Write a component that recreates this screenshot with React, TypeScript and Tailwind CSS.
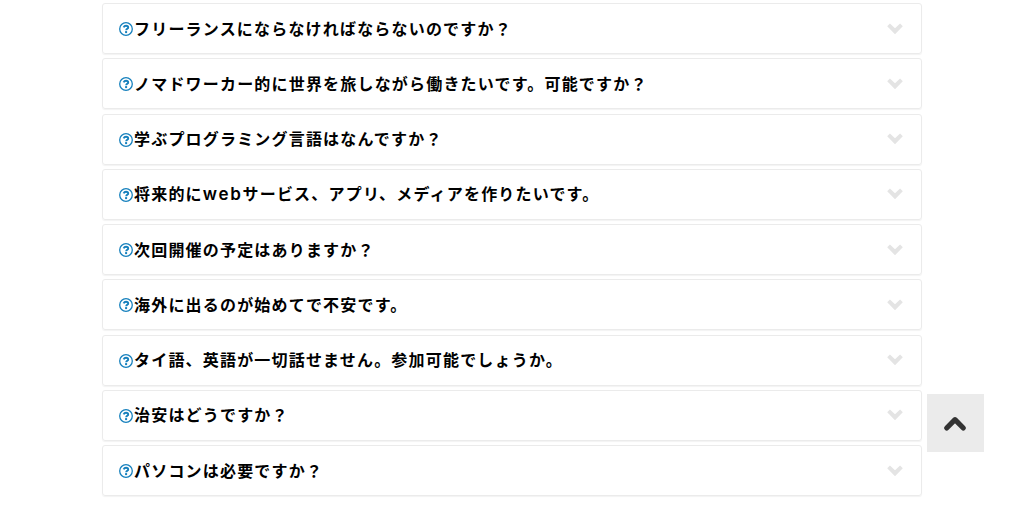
const questions = [
  "フリーランスにならなければならないのですか？",
  "ノマドワーカー的に世界を旅しながら働きたいです。可能ですか？",
  "学ぶプログラミング言語はなんですか？",
  "将来的にwebサービス、アプリ、メディアを作りたいです。",
  "次回開催の予定はありますか？",
  "海外に出るのが始めてで不安です。",
  "タイ語、英語が一切話せません。参加可能でしょうか。",
  "治安はどうですか？",
  "パソコンは必要ですか？",
];

function QuestionIcon() {
  return (
    <svg viewBox="0 0 14 14" className="mt-px size-3.5 shrink-0 text-[#1680bd]" fill="none" stroke="currentColor">
      <circle cx="7" cy="7" r="6.3" strokeWidth="1.3" />
      <path d="M4.6 5.3C5.1 4.2 5.9 3.7 7 3.7c1.2 0 2.2.7 2.2 1.7 0 1.4-2 1.4-2 2.9" strokeWidth="1.9" />
      <path d="M7.1 9.1v2" strokeWidth="2" />
    </svg>
  );
}

function Question({ text }: { text: string }) {
  return (
    <span className="ml-px flex-1 whitespace-nowrap pt-[0.25px] text-[16px] font-bold leading-6 tracking-[1.19px] text-black">
      {text.split(/(web)/).map((part, i) =>
        part === "web" ? <span key={i} className="text-[17px] font-semibold tracking-[1.7px]">{part}</span> : part
      )}
    </span>
  );
}

export default function App() {
  return (
    <main className="relative h-[524px] overflow-hidden bg-white pt-[3px] pl-[102px] font-['Inter','Noto_Sans_CJK_JP',sans-serif]">
      <div className="flex w-[820px] flex-col gap-[4.25px]">
        {questions.map((q) => (
          <button key={q} className="flex h-[51px] items-center rounded-[3px] border border-[#ebebeb] pr-[18px] pl-4 text-left shadow-[0_1px_1px_rgba(0,0,0,0.05)]">
            <QuestionIcon />
            <Question text={q} />
            <svg viewBox="0 0 16 12" className="h-3 w-4 text-[#e4e4e4]" fill="currentColor">
              <path d="M.2 3.2 2.9.4 8 5.2 13.1.4 15.8 3.2 8 11.2Z" />
            </svg>
          </button>
        ))}
      </div>
      <button className="absolute top-[394px] left-[927px] flex h-[58px] w-[57px] items-center justify-center bg-[#ebebeb] pr-[2px]">
        <svg viewBox="0 0 24 18" className="h-[18px] w-6 text-[#333]" fill="none" stroke="currentColor" strokeWidth="5.2" strokeLinecap="round" strokeLinejoin="round">
          <path d="M3.7 14 12 5.7 20.3 14" />
        </svg>
      </button>
    </main>
  );
}
